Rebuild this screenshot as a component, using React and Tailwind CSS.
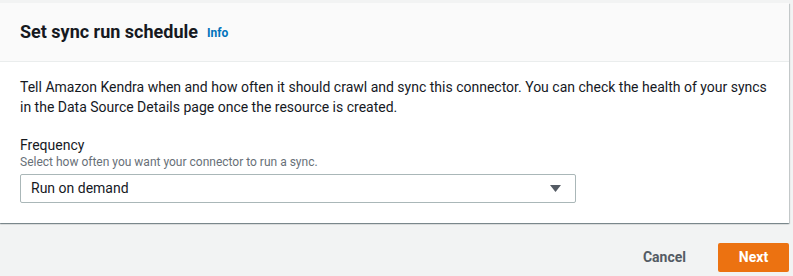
export default function App() {
  const font = { fontFamily: 'Roboto, "Noto Sans", Arial, sans-serif' };
  return (
    <div className="w-[793px] h-[276px] bg-[#f2f3f3] pt-[3px] pr-[4px] text-[#16191f] overflow-hidden" style={font}>
      <div className="bg-white shadow-[0_1px_1px_0_rgba(0,28,36,0.3),1px_1px_1px_0_rgba(0,28,36,0.15),-1px_1px_1px_0_rgba(0,28,36,0.15)]">
        <div className="h-[59px] bg-[#fafafa] border-b border-[#eaeded] px-[20px] flex items-center">
          <h2 className="text-[18px] font-bold leading-[22px]">Set sync run schedule</h2>
          <span className="ml-[9px] text-[12px] font-bold text-[#0073bb] leading-[22px] mt-[2px]">Info</span>
        </div>
        <div className="px-[20px] pt-[15px] pb-[20px]">
          <p className="text-[14px] leading-[20px]">
            Tell Amazon Kendra when and how often it should crawl and sync this connector. You can check the health of your syncs in the Data Source Details page once the resource is created.
          </p>
          <div className="mt-[19px]">
            <div className="text-[14px] leading-[18px]">Frequency</div>
            <div className="text-[12px] leading-[16px] text-[#687078]">Select how often you want your connector to run a sync.</div>
            <div className="mt-[4px] w-[556px] h-[29px] border border-[#aab7b8] rounded-[2px] bg-white flex items-center justify-between pl-[10px] pr-[14px]">
              <span className="text-[14px]">Run on demand</span>
              <svg width="11" height="7" viewBox="0 0 11 7"><path d="M0 0h11L5.5 7z" fill="#545b64" /></svg>
            </div>
          </div>
        </div>
      </div>
      <div className="flex justify-end items-center mt-[20px] gap-[30px]">
        <button className="text-[14px] font-bold text-[#545b64] px-[2px]">Cancel</button>
        <button className="h-[29px] w-[71px] rounded-[2px] bg-[#ec7211] text-white text-[14px] font-bold">Next</button>
      </div>
    </div>
  );
}
